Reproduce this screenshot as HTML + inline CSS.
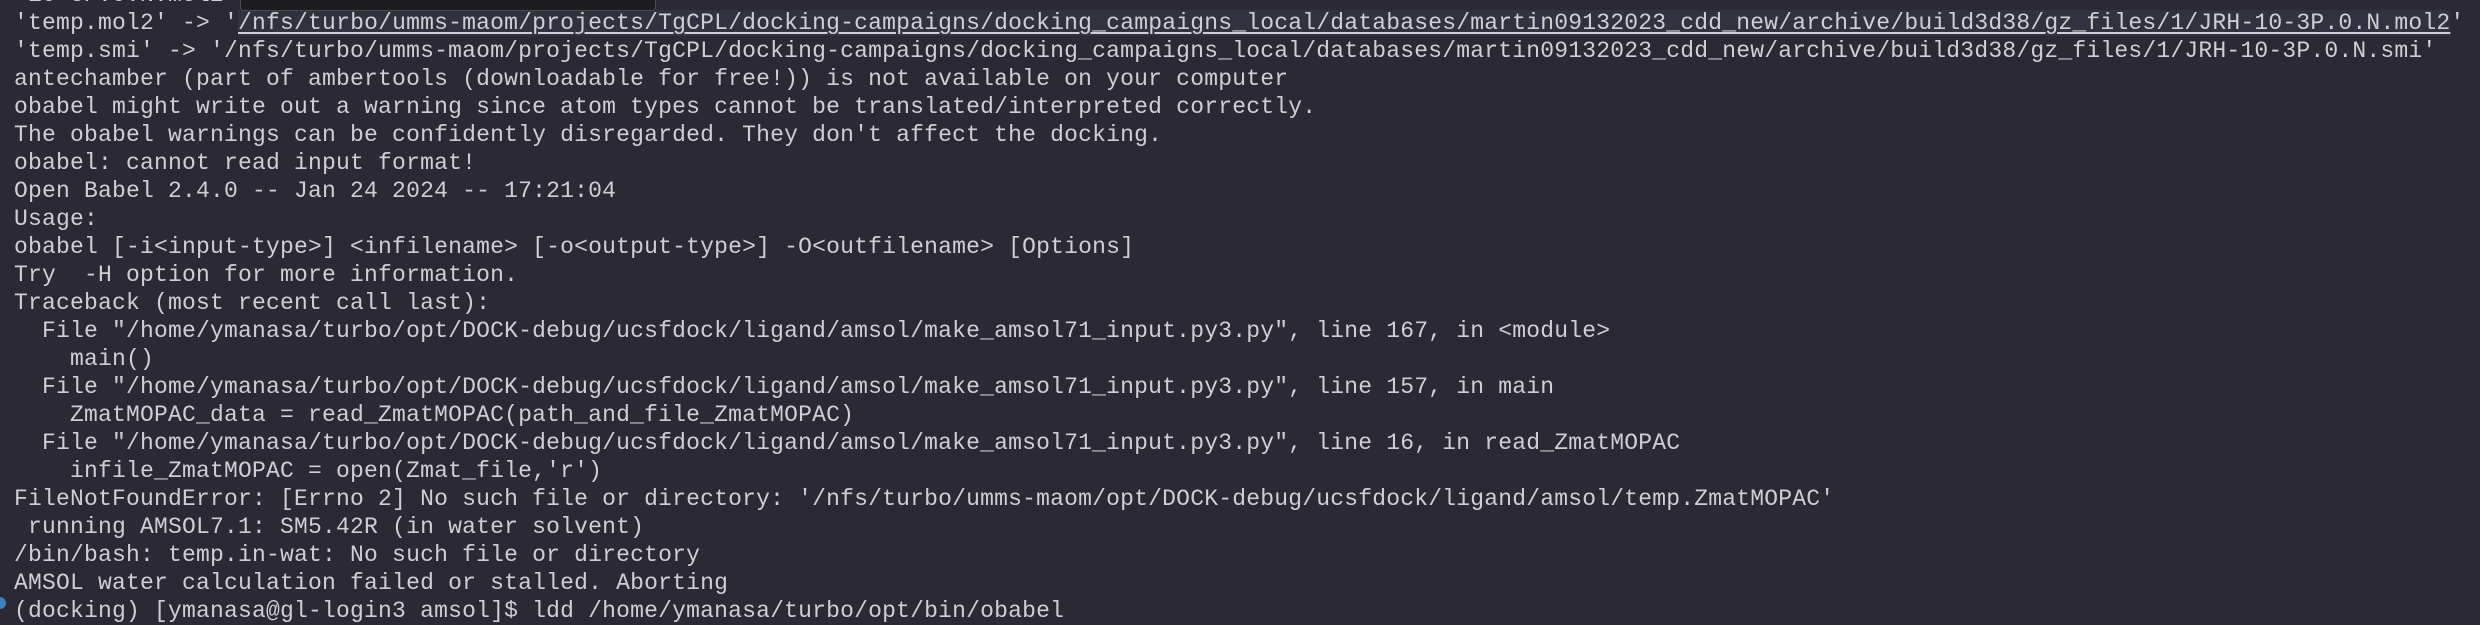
<!DOCTYPE html>
<html><head><meta charset="utf-8"><style>
html,body{margin:0;padding:0;width:2480px;height:610px;overflow:hidden;background:#2a2934;}
pre{position:absolute;left:14px;top:-19px;margin:0;font-family:"Liberation Mono",monospace;font-size:23px;letter-spacing:0.2px;line-height:28px;color:#cfcfd3;white-space:pre;}
.hl{background:#30323f;text-decoration:underline;text-underline-offset:3px;text-decoration-thickness:2px;}
#box{position:absolute;left:240px;top:-4px;width:414px;height:13px;background:#1d1d20;border:1px solid #4a4a4e;border-radius:4px;z-index:2;}
#dot{position:absolute;left:-6px;top:597px;width:12px;height:12px;border-radius:50%;background:#3d7fc4;}
</style></head><body>
<pre>-10-3P.0.N.mol2
'temp.mol2' -&gt; '<span class="hl">/nfs/turbo/umms-maom/projects/TgCPL/docking-campaigns/docking_campaigns_local/databases/martin09132023_cdd_new/archive/build3d38/gz_files/1/JRH-10-3P.0.N.mol2</span>'
'temp.smi' -&gt; '/nfs/turbo/umms-maom/projects/TgCPL/docking-campaigns/docking_campaigns_local/databases/martin09132023_cdd_new/archive/build3d38/gz_files/1/JRH-10-3P.0.N.smi'
antechamber (part of ambertools (downloadable for free!)) is not available on your computer
obabel might write out a warning since atom types cannot be translated/interpreted correctly.
The obabel warnings can be confidently disregarded. They don't affect the docking.
obabel: cannot read input format!
Open Babel 2.4.0 -- Jan 24 2024 -- 17:21:04
Usage:
obabel [-i&lt;input-type&gt;] &lt;infilename&gt; [-o&lt;output-type&gt;] -O&lt;outfilename&gt; [Options]
Try  -H option for more information.
Traceback (most recent call last):
  File "/home/ymanasa/turbo/opt/DOCK-debug/ucsfdock/ligand/amsol/make_amsol71_input.py3.py", line 167, in &lt;module&gt;
    main()
  File "/home/ymanasa/turbo/opt/DOCK-debug/ucsfdock/ligand/amsol/make_amsol71_input.py3.py", line 157, in main
    ZmatMOPAC_data = read_ZmatMOPAC(path_and_file_ZmatMOPAC)
  File "/home/ymanasa/turbo/opt/DOCK-debug/ucsfdock/ligand/amsol/make_amsol71_input.py3.py", line 16, in read_ZmatMOPAC
    infile_ZmatMOPAC = open(Zmat_file,'r')
FileNotFoundError: [Errno 2] No such file or directory: '/nfs/turbo/umms-maom/opt/DOCK-debug/ucsfdock/ligand/amsol/temp.ZmatMOPAC'
 running AMSOL7.1: SM5.42R (in water solvent)
/bin/bash: temp.in-wat: No such file or directory
AMSOL water calculation failed or stalled. Aborting
(docking) [ymanasa@gl-login3 amsol]$ ldd /home/ymanasa/turbo/opt/bin/obabel</pre>
<div id="box"></div>
<div id="dot"></div>
</body></html>
